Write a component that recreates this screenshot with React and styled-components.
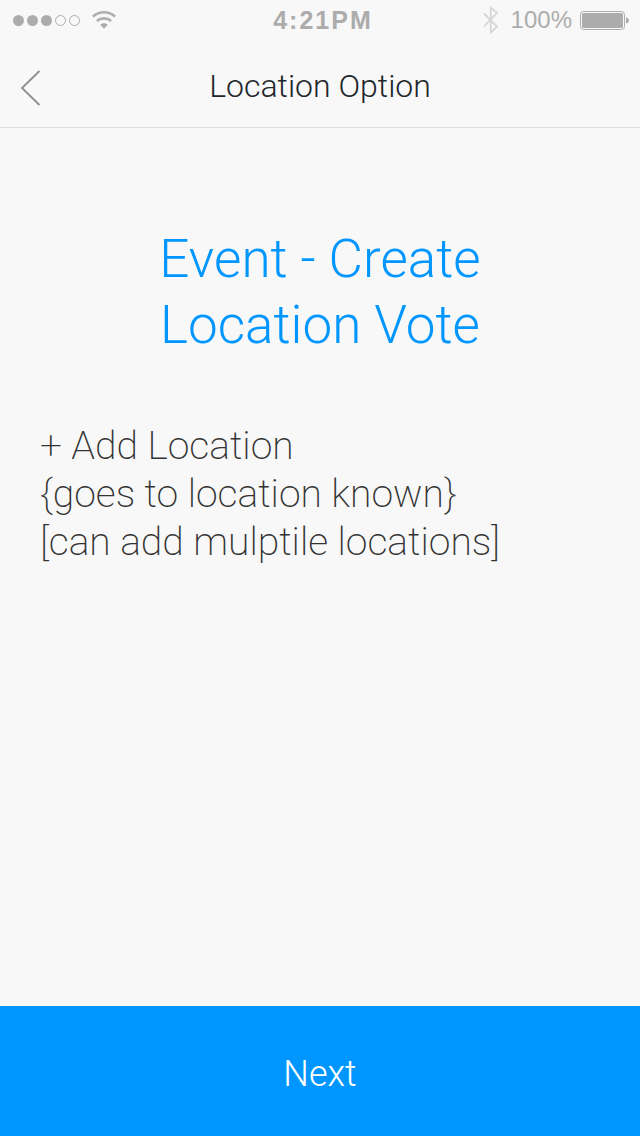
import React from "react";
import styled, { createGlobalStyle } from "styled-components";

const GlobalStyle = createGlobalStyle`
  * { box-sizing: border-box; }
  body {
    margin: 0;
    background: #f8f8f8;
    font-family: Roboto, "Liberation Sans", sans-serif;
  }
`;

const Screen = styled.div`
  display: flex;
  flex-direction: column;
  min-height: 100vh;
  background: #f8f8f8;
`;

const StatusBar = styled.div`
  display: grid;
  grid-template-columns: 1fr auto 1fr;
  align-items: center;
  height: 40px;
  padding: 0 11px 0 13px;
  color: #acacac;
  font-family: "Liberation Sans", Arial, sans-serif;
  font-size: 25px;
  line-height: 40px;
`;

const StatusGroup = styled.div`
  display: flex;
  align-items: center;
  justify-content: ${(p) => (p.$end ? "flex-end" : "flex-start")};
  gap: ${(p) => (p.$end ? "8px" : "11px")};
`;

const Clock = styled.time`
  padding-left: 4px;
  font-weight: 700;
  letter-spacing: 2px;
`;

const Charge = styled.span`
  padding-left: 4px;
  font-size: 24px;
`;

const Header = styled.header`
  display: grid;
  grid-template-columns: 64px 1fr 64px;
  align-items: center;
  height: 88px;
  padding-top: 4px;
  border-bottom: 1px solid #dfe0e1;
`;

const BackButton = styled.button`
  display: flex;
  align-items: center;
  height: 64px;
  padding: 4px 0 0 20px;
  border: 0;
  background: none;
  cursor: pointer;
`;

const Title = styled.h1`
  margin: 0;
  color: #21262b;
  font-size: 32px;
  font-weight: 350;
  line-height: 40px;
  text-align: center;
`;

const Main = styled.main`
  flex: 1;
  padding: 98px 40px 40px;
`;

const Heading = styled.h2`
  max-width: 400px;
  margin: 0 auto 64px;
  color: #0096ff;
  font-size: 53px;
  font-weight: 320;
  line-height: 66px;
  text-align: center;
`;

const AddButton = styled.button`
  display: block;
  padding: 0;
  border: 0;
  background: none;
  color: #333333;
  font: inherit;
  font-size: 39px;
  font-weight: 200;
  line-height: 48px;
  cursor: pointer;
`;

const Note = styled.p`
  margin: 0;
  color: #333333;
  font-size: 39px;
  font-weight: 200;
  line-height: 48px;
`;

const NextButton = styled.button`
  width: 100%;
  height: 130px;
  padding: 6px 0 0;
  border: 0;
  background: #0096ff;
  color: #ffffff;
  font: inherit;
  font-size: 36px;
  font-weight: 350;
  line-height: 48px;
  cursor: pointer;
`;

const Signal = () => (
  <svg width="68" height="12" viewBox="0 0 68 12" fill="#acacac" aria-hidden="true">
    <circle cx="5.5" cy="6.5" r="5.5" />
    <circle cx="19.5" cy="6.5" r="5.5" />
    <circle cx="33.5" cy="6.5" r="5.5" />
    <circle cx="47.5" cy="6.5" r="5" fill="none" stroke="#acacac" />
    <circle cx="61.5" cy="6.5" r="5" fill="none" stroke="#acacac" />
  </svg>
);

const Wifi = () => (
  <svg width="24" height="18" viewBox="0 0 24 18" aria-hidden="true">
    <g fill="none" stroke="#b0acac" strokeWidth="2.6">
      <path d="M.9 5.6Q5.6 1.3 12 1.3T23.1 5.6" />
      <path d="M4.9 10.1Q8 7.4 12 7.4T19.1 10.1" />
    </g>
    <path d="M8.2 13.7Q12 10.8 15.8 13.7L12 17.8Z" fill="#b0acac" />
  </svg>
);

const Bluetooth = () => (
  <svg width="16" height="30" viewBox="0 0 16 30" fill="none" stroke="#d6d6d6" strokeWidth="1.8" aria-hidden="true">
    <path d="M1 8.5L14 21.6L7.8 27.6V2.8L14 7.8L1 21.5" />
  </svg>
);

const Battery = () => (
  <svg width="49" height="20" viewBox="0 0 49 20" aria-hidden="true">
    <rect x=".5" y="1.5" width="44" height="18" rx="3" fill="none" stroke="#acacac" />
    <rect x="2" y="3" width="41" height="15" rx="1.5" fill="#acacac" />
    <path d="M46 7.2Q49 8.2 49 10.5T46 13.8Z" fill="#acacac" />
  </svg>
);

const BackArrow = () => (
  <svg width="21" height="36" viewBox="0 0 21 36" fill="none" stroke="#8c8e90" strokeWidth="1.8" aria-hidden="true">
    <path d="M19.5 1L2 18L19.5 35" />
  </svg>
);

export default function App() {
  return (
    <>
      <GlobalStyle />
      <Screen>
        <StatusBar>
          <StatusGroup>
            <Signal />
            <Wifi />
          </StatusGroup>
          <Clock>4:21PM</Clock>
          <StatusGroup $end>
            <Bluetooth />
            <Charge>100%</Charge>
            <Battery />
          </StatusGroup>
        </StatusBar>
        <Header>
          <BackButton type="button" aria-label="Back">
            <BackArrow />
          </BackButton>
          <Title>Location Option</Title>
        </Header>
        <Main>
          <Heading>Event - Create Location Vote</Heading>
          <AddButton type="button">+ Add Location</AddButton>
          <Note>{"{goes to location known}"}</Note>
          <Note>[can add mulptile locations]</Note>
        </Main>
        <NextButton type="button">Next</NextButton>
      </Screen>
    </>
  );
}
